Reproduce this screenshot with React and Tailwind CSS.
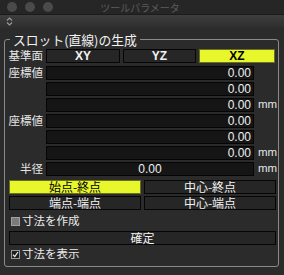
import React from "react";

const jp = { fontFamily: '"Noto Sans CJK JP", "Noto Sans", sans-serif' };
const num = { fontFamily: '"Liberation Sans", Arial, sans-serif' };

function Field({ value = "0.00", center = false }) {
  return (
    <div
      className={`h-[14px] w-[208px] bg-[#151515] border border-[#050505] flex items-center text-[12px] text-[#f0f0f0] leading-none ${center ? "justify-center" : "justify-end pr-[2px]"}`}
      style={num}
    >
      {value}
    </div>
  );
}

function Btn({ children, active, bold, className = "" }) {
  return (
    <div
      className={`h-[14px] flex items-center justify-center border leading-none ${active ? "bg-[#e8f72c] border-[#6b6f20] text-black" : "bg-[#262626] border-[#060606] text-[#f2f2f2]"} ${bold ? "font-bold text-[12px]" : "text-[12px]"} ${className}`}
      style={bold ? num : jp}
    >
      {children}
    </div>
  );
}

function Label({ children }) {
  return (
    <div className="w-[35px] text-right text-[11.5px] leading-none text-[#e6e6e6] shrink-0" style={jp}>
      {children}
    </div>
  );
}

function Row({ label, children, mm }) {
  return (
    <div className="flex items-center h-[14px]">
      <Label>{label}</Label>
      <div className="ml-[3px]">{children}</div>
      {mm && (
        <div className="ml-[4px] text-[11.5px] leading-none text-[#e6e6e6]" style={num}>
          mm
        </div>
      )}
    </div>
  );
}

function Check({ checked, label }) {
  return (
    <div className="flex items-center h-[14px] pl-[3px]">
      {checked ? (
        <div className="w-[9px] h-[9px] border border-[#9a9a9a] bg-[#1e1e1e] flex items-center justify-center">
          <svg width="7" height="7" viewBox="0 0 7 7">
            <path d="M1 3.8 L2.8 5.6 L6 1" stroke="#e8e8e8" strokeWidth="1.3" fill="none" />
          </svg>
        </div>
      ) : (
        <div className="w-[9px] h-[9px] border border-[#a0a0a0] bg-[#7a7a7a]" />
      )}
      <div className="ml-[2px] text-[11.5px] leading-none text-[#ececec]" style={jp}>
        {label}
      </div>
    </div>
  );
}

export default function App() {
  return (
    <div className="w-[284px] h-[275px] bg-[#2b2b2b] overflow-hidden relative">
      {/* title bar */}
      <div className="h-[15px] bg-[#262626] border-b border-[#1b1b1b] flex items-center relative">
        <div className="flex gap-[8px] ml-[7px]">
          <div className="w-[10px] h-[10px] rounded-full bg-[#4a4a4a]" />
          <div className="w-[10px] h-[10px] rounded-full bg-[#4a4a4a]" />
          <div className="w-[10px] h-[10px] rounded-full bg-[#4a4a4a]" />
        </div>
        <div className="absolute left-0 right-0 top-0 h-[15px] flex items-center justify-center pointer-events-none">
          <span className="text-[10px] leading-none text-[#5c5c5c] ml-[-4px]" style={jp}>ツールパラメータ</span>
        </div>
      </div>
      {/* header strip */}
      <div className="h-[13px] bg-gradient-to-b from-[#3e3e3e] to-[#2e2e2e] flex items-center pl-[6px]">
        <svg width="7" height="9" viewBox="0 0 7 9">
          <path d="M1 3.5 L3.5 1 L6 3.5" stroke="#9a9a9a" strokeWidth="1.2" fill="none" />
          <path d="M1 5.5 L3.5 8 L6 5.5" stroke="#9a9a9a" strokeWidth="1.2" fill="none" />
        </svg>
      </div>
      {/* group box */}
      <div className="mt-[11px] ml-[4px] w-[275px] h-[228px] border border-[#8a8a8a] rounded-[3px] relative pl-[3px] pr-[2px] pt-[9px]">
        <div
          className="absolute left-[5px] top-[-8px] bg-[#2b2b2b] px-[3px] text-[12.8px] leading-[15px] text-[#f2f2f2]"
          style={jp}
        >
          スロット(直線)の生成
        </div>
        <div className="flex flex-col">
          <div className="flex items-center h-[14px]">
            <Label>基準面</Label>
            <div className="ml-[3px] flex gap-[3px]">
              <Btn bold className="w-[74px]">XY</Btn>
              <Btn bold className="w-[73px]">YZ</Btn>
              <Btn bold active className="w-[76px]">XZ</Btn>
            </div>
          </div>
          <div className="flex flex-col gap-[2px] mt-[3px]">
            <Row label="座標値"><Field /></Row>
            <Row label=""><Field /></Row>
            <Row label="" mm><Field /></Row>
            <Row label="座標値"><Field /></Row>
            <Row label=""><Field /></Row>
            <Row label="" mm><Field /></Row>
            <Row label="半径" mm><Field center /></Row>
          </div>
          <div className="flex flex-col gap-[2px] mt-[4px] pl-[1px]">
            <div className="flex gap-[3px]">
              <Btn active className="w-[132px]">始点-終点</Btn>
              <Btn className="w-[132px]">中心-終点</Btn>
            </div>
            <div className="flex gap-[3px]">
              <Btn className="w-[132px]">端点-端点</Btn>
              <Btn className="w-[132px]">中心-端点</Btn>
            </div>
          </div>
          <div className="mt-[4px]">
            <Check label="寸法を作成" />
          </div>
          <div className="mt-[3px] pl-[1px]">
            <Btn className="w-[267px]">確定</Btn>
          </div>
          <div className="mt-[2px]">
            <Check checked label="寸法を表示" />
          </div>
        </div>
      </div>
    </div>
  );
}
